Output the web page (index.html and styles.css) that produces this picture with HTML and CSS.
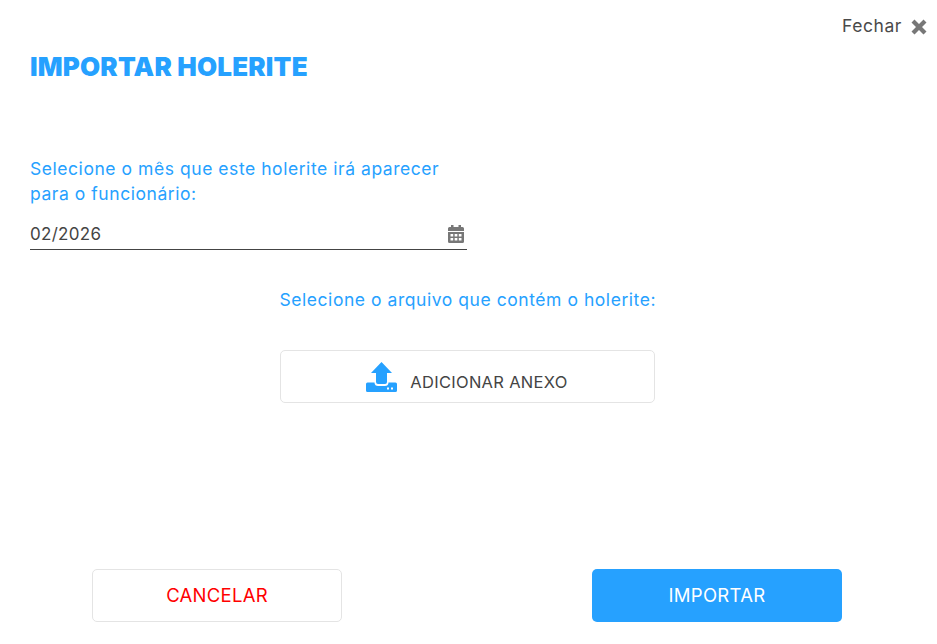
FILE: index.html
```html
<!DOCTYPE html>
<html lang="pt-BR">

<head>
  <meta charset="UTF-8">
  <title>Importar holerite</title>
  <link rel="stylesheet" href="styles.css">
</head>

<body>
  <div class="modal">
    <div class="close-row">
      <span class="close-label">Fechar</span>
      <svg class="close-icon" viewBox="0 0 16 16" aria-hidden="true">
        <path d="M3.500 .5 8 5 12.500 .5 15.500 3.500 11 8 15.500 12.500 12.500 15.500 8 11 3.500 15.500 .5 12.500 5 8 .5 3.500Z" />
      </svg>
    </div>

    <h1>IMPORTAR HOLERITE</h1>

    <div class="month-field">
      <label for="month">Selecione o mês que este holerite irá aparecer para o funcionário:</label>
      <div class="month-input">
        <input type="text" id="month" value="02/2026">
        <svg class="calendar-icon" viewBox="0 0 16 18" aria-hidden="true">
          <path fill-rule="evenodd" d="M3 0h2.500v2h5V0H13v2h1.500A1.500 1.500 0 0 1 16 3.500V6H0V3.500A1.500 1.500 0 0 1 1.500 2H3ZM0 7h16v9.500a1.500 1.500 0 0 1-1.500 1.500h-13A1.500 1.500 0 0 1 0 16.500ZM2.500 9v2.500h2.700V9Zm4.150 0v2.500h2.700V9Zm4.150 0v2.500h2.700V9ZM2.500 13v2.500h2.700V13Zm4.150 0v2.500h2.700V13Zm4.150 0v2.500h2.700V13Z" />
        </svg>
      </div>
    </div>

    <div class="file-field">
      <p>Selecione o arquivo que contém o holerite:</p>
      <button type="button" class="attach-btn">
        <svg class="upload-icon" viewBox="0 0 31 30" aria-hidden="true">
          <path d="M15.500 0 26 11H21V20A2 2 0 0 1 19 22H12A2 2 0 0 1 10 20V11H5Z" />
          <path fill-rule="evenodd" d="M1.500 20.500H8.500C8.500 23 10 24 12 24H19C21 24 22.500 23 22.500 20.500H29.500A1.500 1.500 0 0 1 31 22V28.500A1.500 1.500 0 0 1 29.500 30H1.500A1.500 1.500 0 0 1 0 28.500V22A1.500 1.500 0 0 1 1.500 20.500ZM21 25.500V27.500H23V25.500ZM25 25.500V27.500H27V25.500Z" />
        </svg>
        <span>ADICIONAR ANEXO</span>
      </button>
    </div>

    <div class="actions">
      <button type="button" class="btn btn-cancel">CANCELAR</button>
      <button type="button" class="btn btn-import">IMPORTAR</button>
    </div>
  </div>
</body>

</html>
```

FILE: styles.css
```css
* {
  box-sizing: border-box;
}

body {
  margin: 0;
  background: #fff;
  font-family: "Inter", "Open Sans", sans-serif;
  color: #444;
}

.modal {
  height: 644px;
  padding: 15px 32px 22px 30px;
  display: flex;
  flex-direction: column;
}

.close-row {
  display: flex;
  justify-content: flex-end;
  align-items: center;
  gap: 9px;
  height: 22px;
  margin-right: -22px;
}

.close-label {
  margin-bottom: 2px;
  font-size: 17.500px;
  letter-spacing: 0.55px;
  color: #4a4a4a;
}

.close-icon {
  width: 16px;
  height: 16px;
  fill: #777;
  margin-top: 2px;
}

h1 {
  margin: 12px 0 0;
  font-size: 26px;
  line-height: 36px;
  font-weight: 900;
  color: #26a1ff;
  letter-spacing: 0.18px;
}

.month-field {
  width: 437px;
  margin-top: 71px;
}

.month-field label {
  display: block;
  width: 420px;
  font-size: 17.500px;
  letter-spacing: 0.55px;
  line-height: 25px;
  color: #26a1ff;
}

.month-input {
  display: flex;
  align-items: center;
  height: 41px;
  margin-top: 3px;
  padding-top: 10px;
  border-bottom: 1px solid #444;
}

.month-input input {
  flex: 1;
  min-width: 0;
  border: none;
  outline: none;
  padding: 0;
  font: inherit;
  font-size: 17px;
  letter-spacing: 0.3px;
  color: #444;
}

.calendar-icon {
  width: 16px;
  height: 18px;
  fill: #777;
  margin-right: 3px;
}

.file-field {
  display: flex;
  flex-direction: column;
  align-items: center;
  margin-top: 37px;
}

.file-field p {
  margin: 0;
  width: 376px;
  font-size: 17.500px;
  letter-spacing: 0.55px;
  line-height: 25px;
  text-align: center;
  white-space: nowrap;
  color: #26a1ff;
}

.attach-btn {
  display: flex;
  justify-content: center;
  align-items: center;
  gap: 13px;
  width: 375px;
  height: 53px;
  margin-top: 38px;
  padding: 0 1px 0 0;
  background: #fff;
  border: 1px solid #e4e4e4;
  border-radius: 5px;
  font: inherit;
  font-size: 16.500px;
  letter-spacing: 0.3px;
  color: #444;
}

.attach-btn span {
  margin-top: 10px;
}

.upload-icon {
  width: 31px;
  height: 30px;
  fill: #26a1ff;
}

.actions {
  display: flex;
  justify-content: space-between;
  margin-top: auto;
  padding: 0 63px 0 62px;
}

.btn {
  width: 250px;
  height: 53px;
  padding-bottom: 2px;
  border-radius: 5px;
  font: inherit;
  font-size: 18.500px;
}

.btn-cancel {
  background: #fff;
  border: 1px solid #e4e4e4;
  letter-spacing: 0.25px;
  color: #f00;
}

.btn-import {
  background: #26a1ff;
  border: none;
  letter-spacing: 0.3px;
  color: #fff;
}
```
